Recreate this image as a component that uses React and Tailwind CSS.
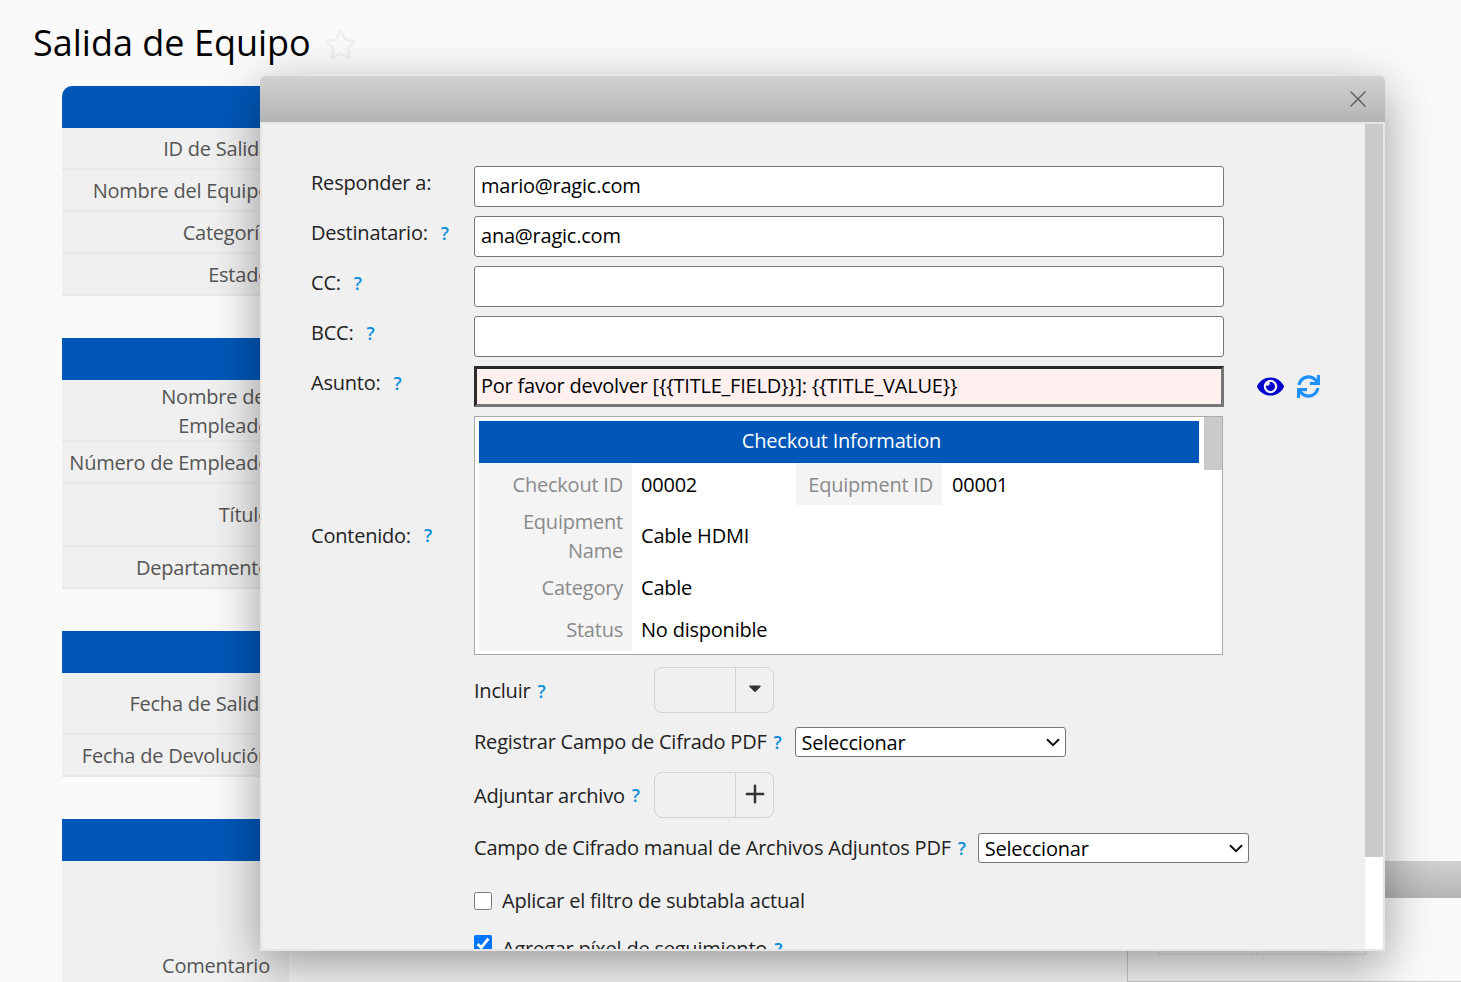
import React from "react";
import { X, Plus } from "lucide-react";
import { FaEye, FaSync, FaCaretDown, FaRegStar } from "react-icons/fa";

const font = "font-['Open_Sans',sans-serif]";

function BgRow({ label, h = "h-[42px]" }) {
  return (
    <div className={`${h} w-[227px] flex items-center justify-end text-right pr-[19px] bg-[#f0f0f0] border-b-2 border-[#e8e8e8] text-[#555] leading-[29px]`}>
      <span>{label}</span>
    </div>
  );
}

function Section({ rows, rounded }) {
  return (
    <div className="mb-[42px]">
      <div className={`h-[42px] w-[300px] bg-[#0057b8] ${rounded ? "rounded-tl-[10px]" : ""}`} />
      {rows}
    </div>
  );
}

function Help({ className = "" }) {
  return <span className={`text-[#0b8fdc] text-[18px] font-semibold ${className}`}>?</span>;
}

function Field({ label, help, value }) {
  return (
    <div className="flex items-start mb-[9px]">
      <div className="w-[163px] flex items-center gap-[13px] h-[34px]">
        <span>{label}</span>
        {help && <Help />}
      </div>
      <input readOnly value={value} className="w-[750px] h-[41px] bg-white border border-[#767676] rounded-[3px] pl-[6px] pr-[7px] pb-[2px] text-black" />
    </div>
  );
}

function Box({ children }) {
  return (
    <div className="w-[120px] h-[46px] flex border border-[#d2d2d2] rounded-[8px] overflow-hidden">
      <div className="w-[81px] border-r border-[#d2d2d2]" />
      <div className="flex-1 flex items-center justify-center text-[#333]">{children}</div>
    </div>
  );
}

function Info() {
  return (
    <div className="relative w-[749px] h-[239px] bg-white border border-[#aaa] p-[4px] overflow-hidden">
      <div className="absolute right-0 top-0 w-[18px] h-[53px] bg-[#cacaca]" />
      <div className="w-[720px] h-[42px] bg-[#0057b8] text-white flex items-center justify-center pl-[5px] pb-[2px]">Checkout Information</div>
      <div className="flex h-[42px]">
        <div className="w-[153px] bg-[#f4f4f4] text-[#8a8a8a] flex items-center justify-end pr-[9px] pt-[1px]">Checkout ID</div>
        <div className="w-[164px] flex items-center pl-[9px] pt-[1px] text-black">00002</div>
        <div className="w-[146px] bg-[#f4f4f4] text-[#8a8a8a] flex items-center justify-end pr-[9px] pt-[1px]">Equipment ID</div>
        <div className="flex items-center pl-[10px] pt-[1px] text-black">00001</div>
      </div>
      <div className="flex h-[62px]">
        <div className="w-[153px] bg-[#f4f4f4] text-[#8a8a8a] flex items-center justify-end text-right pr-[9px] leading-[29px]">Equipment<br />Name</div>
        <div className="flex items-center pl-[9px] text-black">Cable HDMI</div>
      </div>
      <div className="flex h-[42px]">
        <div className="w-[153px] bg-[#f4f4f4] text-[#8a8a8a] flex items-center justify-end pr-[9px]">Category</div>
        <div className="flex items-center pl-[9px] text-black">Cable</div>
      </div>
      <div className="flex h-[42px]">
        <div className="w-[153px] bg-[#f4f4f4] text-[#8a8a8a] flex items-center justify-end pr-[9px]">Status</div>
        <div className="flex items-center pl-[9px] text-black">No disponible</div>
      </div>
    </div>
  );
}

function Pick({ className = "" }) {
  return (
    <div className={`relative w-[271px] h-[30px] ${className}`}>
      <select className="appearance-none w-full h-full bg-white border border-[#767676] rounded-[3px] text-black pl-[6px] pb-[3px]">
        <option>Seleccionar</option>
      </select>
      <svg viewBox="0 0 14 9" className="absolute right-[6px] top-[11px] w-[14px] h-[9px] pointer-events-none" fill="none" stroke="#111" strokeWidth="2">
        <path d="M1 1.2 L7 7.2 L13 1.2" />
      </svg>
    </div>
  );
}

export default function App() {
  return (
    <div className={`relative h-[982px] overflow-hidden bg-[#fafafa] text-[20px] tracking-[-0.22px] ${font}`}>
      <div className="pl-[33px] pt-[17px] flex items-center h-[86px] pb-[17px]">
        <h1 className="text-[36px] leading-[52px] tracking-normal text-black">Salida de Equipo</h1>
        <FaRegStar className="ml-[13px] mt-[2px] w-[33px] h-[33px] text-[#f0f0f0]" />
      </div>
      <div className="pl-[62px]">
        <Section rounded rows={<>
          <BgRow label="ID de Salida" />
          <BgRow label="Nombre del Equipo" />
          <BgRow label="Categoría" />
          <BgRow label="Estado" />
        </>} />
        <Section rows={<>
          <BgRow label={<span className="block pt-[2px]">Nombre del<br />Empleado</span>} h="h-[62px]" />
          <BgRow label="Número de Empleado" />
          <BgRow label="Título" h="h-[63px]" />
          <BgRow label="Departamento" />
        </>} />
        <Section rows={<>
          <BgRow label="Fecha de Salida" h="h-[62px]" />
          <BgRow label="Fecha de Devolución" />
        </>} />
        <Section rows={<BgRow label="Comentario" h="h-[211px]" />} />
      </div>

      {/* dialog underneath */}
      <div className="absolute left-[1127px] top-[861px] w-[400px] h-[121px] border border-[#ccc] bg-[#fafafa]">
        <div className="h-[36px] bg-gradient-to-b from-[#d0d0d0] to-[#b5b5b5]" />
        <div className="flex gap-[2px] pl-[30px] mt-[52px]">
          <div className="w-[96px] h-[5px] border border-[#e4e4e4]" />
          <div className="w-[110px] h-[5px] border border-[#e4e4e4]" />
        </div>
      </div>

      {/* modal */}
      <div className="absolute left-[260px] top-[74px] w-[1125px] h-[877px] flex flex-col border-t-2 border-[#e6e6e6] rounded-t-[6px] shadow-[0_16px_50px_rgba(0,0,0,0.38)] overflow-hidden text-[#222]">
        <div className="h-[46px] shrink-0 flex items-center justify-end pr-[13px] bg-gradient-to-b from-[#d2d2d2] to-[#b4b4b4]">
          <X className="w-[28px] h-[28px] text-[#5a5a5a]" strokeWidth={1.2} />
        </div>
        <div className="flex-1 flex min-h-0 bg-[#f0f0f0] border-2 border-[#e6e6e6]">
          <div className="flex-1 pl-[49px] pt-[42px] min-w-0 overflow-hidden">
            <Field label="Responder a:" value="mario@ragic.com" />
            <Field label="Destinatario:" help value="ana@ragic.com" />
            <Field label="CC:" help value="" />
            <Field label="BCC:" help value="" />
            <div className="flex items-start mb-[9px]">
              <div className="w-[163px] flex items-center gap-[13px] h-[34px]">
                <span>Asunto:</span><Help />
              </div>
              <input readOnly value="Por favor devolver [{{TITLE_FIELD}}]: {{TITLE_VALUE}}" className="w-[750px] h-[41px] bg-[#fff0f0] border-[3px] border-t-[#2b2b2b] border-l-[#2b2b2b] border-r-[#767676] border-b-[#767676] pl-[4px] pr-[5px] pb-[2px] text-black" />
              <FaEye className="ml-[33px] mt-[7px] w-[27px] h-[27px] text-[#0000cc]" />
              <FaSync className="ml-[13px] mt-[9px] w-[23px] h-[23px] text-[#1e90ff]" />
            </div>
            <div className="flex items-center mb-[12px]">
              <div className="w-[163px] flex items-center gap-[13px]">
                <span>Contenido:</span><Help />
              </div>
              <Info />
            </div>
            <div className="pl-[163px]">
              <div className="flex items-center h-[45px] mb-[15px]">
                <div className="w-[180px] flex items-center gap-[7px] mt-[3px]"><span>Incluir</span><Help /></div>
                <Box><FaCaretDown className="w-[20px] h-[20px] mb-[3px]" /></Box>
              </div>
              <div className="flex items-center gap-[7px] h-[30px] mb-[15px]">
                <span>Registrar Campo de Cifrado PDF</span><Help /><Pick className="ml-[6px]" />
              </div>
              <div className="flex items-center h-[46px] mb-[15px]">
                <div className="w-[180px] flex items-center gap-[7px] mt-[1px]"><span>Adjuntar archivo</span><Help /></div>
                <Box><Plus className="w-[28px] h-[28px] mb-[3px]" strokeWidth={2.1} /></Box>
              </div>
              <div className="flex items-center gap-[7px] h-[30px] mb-[24px]">
                <span>Campo de Cifrado manual de Archivos Adjuntos PDF</span><Help /><Pick className="ml-[5px]" />
              </div>
              <label className="flex items-center gap-[10px] h-[28px] mb-[20px]">
                <input type="checkbox" className="w-[18px] h-[18px] m-0" /><span>Aplicar el filtro de subtabla actual</span>
              </label>
              <label className="flex items-center gap-[10px] h-[28px]">
                <input type="checkbox" defaultChecked className="w-[18px] h-[18px] m-0 mb-[10px]" /><span>Agregar píxel de seguimiento</span><Help className="-ml-[3px]" />
              </label>
            </div>
          </div>
          <div className="w-[18px] shrink-0 bg-white">
            <div className="h-[733px] bg-[#cacaca]" />
          </div>
        </div>
      </div>
    </div>
  );
}
